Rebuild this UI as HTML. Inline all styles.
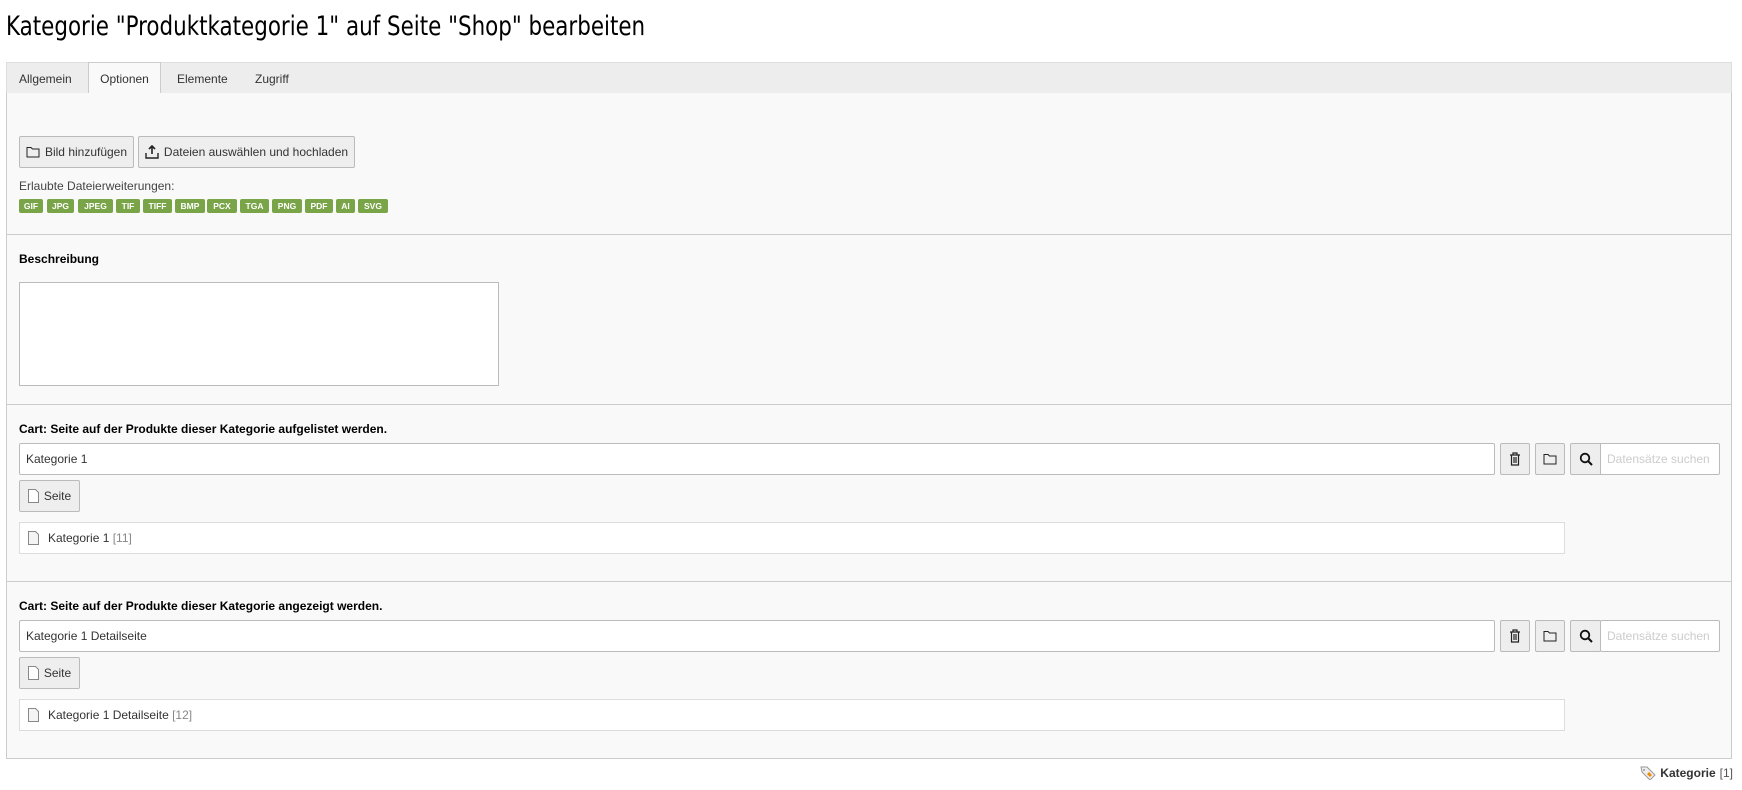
<!DOCTYPE html>
<html><head><meta charset="utf-8"><style>
*{box-sizing:border-box}
body{margin:0;width:1742px;height:790px;background:#fff;font-family:"Liberation Sans",sans-serif;font-size:12px;color:#333;position:relative;overflow:hidden}
.a{position:absolute}
h1{position:absolute;left:6px;top:11px;margin:0;font-family:"DejaVu Sans Condensed","Liberation Sans Narrow",sans-serif;font-weight:normal;font-size:27px;color:#000;white-space:nowrap;transform:scaleX(0.882);transform-origin:0 0}
.tabs{left:6px;top:62px;width:1726px;height:32px;background:#ededed;border:1px solid #ddd;border-bottom:1px solid #ccc}
.tab{position:absolute;top:9px;font-size:12px;color:#333}
.tabact{left:81px;top:-1px;width:73px;height:33px;background:#f9f9f9;border:1px solid #ccc;border-bottom:none;padding-top:9px;text-align:center}
.panel{left:6px;top:93px;width:1726px;height:666px;background:#f9f9f9;border:1px solid #ccc;border-top:none}
.hr{left:6px;width:1726px;height:1px;background:#ccc}
.btn{background:#eee;border:1px solid #bbb;border-radius:2px;display:flex;align-items:center;justify-content:center;gap:5px;color:#333}
.badge{position:absolute;top:199px;height:14px;background:#79a548;color:#fff;font-weight:bold;font-size:8.5px;border-radius:2px;line-height:14px;text-align:center}
.lbl{font-weight:bold;color:#000}
.inp{background:#fff;border:1px solid #bbb;border-radius:2px;padding-left:6px;display:flex;align-items:center}
.list{background:#fff;border:1px solid #ddd;display:flex;align-items:center;padding-left:8px;gap:9px}
</style></head><body>
<h1>Kategorie "Produktkategorie 1" auf Seite "Shop" bearbeiten</h1>
<div class="a tabs">
<span class="tab" style="left:12px">Allgemein</span>
<div class="a tabact">Optionen</div>
<span class="tab" style="left:170px">Elemente</span>
<span class="tab" style="left:248px">Zugriff</span>
</div>
<div class="a panel"></div>

<div class="a btn" style="left:19px;top:136px;width:115px;height:32px"><svg width="14" height="12" viewBox="0 0 14 12"><path d="M1 1.5h4l1.5 1.5h6.5v8h-12z" fill="none" stroke="#222"/></svg>Bild hinzufügen</div>
<div class="a btn" style="left:138px;top:136px;width:217px;height:32px"><svg width="14" height="14" viewBox="0 0 14 14"><path d="M7 1v8M4 4l3-3 3 3" fill="none" stroke="#222" stroke-width="1.6"/><path d="M1 8v5h12V8" fill="none" stroke="#222" stroke-width="1.4"/></svg>Dateien auswählen und hochladen</div>
<div class="a" style="left:19px;top:179px;color:#444">Erlaubte Dateierweiterungen:</div>
<div class="badge" style="left:19px;width:24px">GIF</div>
<div class="badge" style="left:47px;width:27px">JPG</div>
<div class="badge" style="left:78px;width:35px">JPEG</div>
<div class="badge" style="left:116px;width:24px">TIF</div>
<div class="badge" style="left:143px;width:29px">TIFF</div>
<div class="badge" style="left:175px;width:30px">BMP</div>
<div class="badge" style="left:207px;width:30px">PCX</div>
<div class="badge" style="left:240px;width:29px">TGA</div>
<div class="badge" style="left:272px;width:30px">PNG</div>
<div class="badge" style="left:305px;width:28px">PDF</div>
<div class="badge" style="left:336px;width:19px">AI</div>
<div class="badge" style="left:358px;width:30px">SVG</div>
<div class="a hr" style="top:234px"></div>

<div class="a lbl" style="left:19px;top:252px">Beschreibung</div>
<div class="a" style="left:19px;top:282px;width:480px;height:104px;background:#fff;border:1px solid #bbb"></div>
<div class="a hr" style="top:404px"></div>

<div class="a lbl" style="left:19px;top:422px">Cart: Seite auf der Produkte dieser Kategorie aufgelistet werden.</div>
<div class="a inp" style="left:19px;top:443px;width:1476px;height:32px">Kategorie 1</div>
<div class="a btn" style="left:1500px;top:443px;width:30px;height:32px"><svg width="12" height="14" viewBox="0 0 12 14"><path d="M1 3h10M4 3V1h4v2M2.5 3v10h7V3M5 5v6M7 5v6" fill="none" stroke="#222" stroke-width="1.2"/></svg></div>
<div class="a btn" style="left:1535px;top:443px;width:30px;height:32px"><svg width="14" height="12" viewBox="0 0 14 12"><path d="M1 1.5h4l1.5 1.5h6.5v8h-12z" fill="none" stroke="#222"/></svg></div>
<div class="a btn" style="left:1570px;top:443px;width:31px;height:32px;border-radius:2px 0 0 2px"><svg width="14" height="14" viewBox="0 0 14 14"><circle cx="6" cy="6" r="4.3" fill="none" stroke="#111" stroke-width="1.8"/><path d="M9 9l4 4" stroke="#111" stroke-width="2"/></svg></div>
<div class="a inp" style="left:1600px;top:443px;width:120px;height:32px;color:#ccc;border-radius:0 2px 2px 0">Datensätze suchen</div>
<div class="a btn" style="left:19px;top:480px;width:61px;height:32px"><svg width="11" height="14" viewBox="0 0 11 14"><path d="M.5.5h7l3 3v10H.5z" fill="#fff" stroke="#888"/></svg>Seite</div>
<div class="a list" style="left:19px;top:522px;width:1546px;height:32px"><svg width="11" height="14" viewBox="0 0 11 14"><path d="M.5.5h7l3 3v10H.5z" fill="#f4f4f4" stroke="#888"/></svg><span>Kategorie 1 <span style="color:#888">[11]</span></span></div>
<div class="a hr" style="top:581px"></div>

<div class="a lbl" style="left:19px;top:599px">Cart: Seite auf der Produkte dieser Kategorie angezeigt werden.</div>
<div class="a inp" style="left:19px;top:620px;width:1476px;height:32px">Kategorie 1 Detailseite</div>
<div class="a btn" style="left:1500px;top:620px;width:30px;height:32px"><svg width="12" height="14" viewBox="0 0 12 14"><path d="M1 3h10M4 3V1h4v2M2.5 3v10h7V3M5 5v6M7 5v6" fill="none" stroke="#222" stroke-width="1.2"/></svg></div>
<div class="a btn" style="left:1535px;top:620px;width:30px;height:32px"><svg width="14" height="12" viewBox="0 0 14 12"><path d="M1 1.5h4l1.5 1.5h6.5v8h-12z" fill="none" stroke="#222"/></svg></div>
<div class="a btn" style="left:1570px;top:620px;width:31px;height:32px"><svg width="14" height="14" viewBox="0 0 14 14"><circle cx="6" cy="6" r="4.3" fill="none" stroke="#111" stroke-width="1.8"/><path d="M9 9l4 4" stroke="#111" stroke-width="2"/></svg></div>
<div class="a inp" style="left:1600px;top:620px;width:120px;height:32px;color:#ccc">Datensätze suchen</div>
<div class="a btn" style="left:19px;top:657px;width:61px;height:32px"><svg width="11" height="14" viewBox="0 0 11 14"><path d="M.5.5h7l3 3v10H.5z" fill="#fff" stroke="#888"/></svg>Seite</div>
<div class="a list" style="left:19px;top:699px;width:1546px;height:32px"><svg width="11" height="14" viewBox="0 0 11 14"><path d="M.5.5h7l3 3v10H.5z" fill="#f4f4f4" stroke="#888"/></svg><span>Kategorie 1 Detailseite <span style="color:#888">[12]</span></span></div>

<div class="a" style="right:9px;top:766px;display:flex;align-items:center;gap:4px"><svg width="16" height="14" viewBox="0 0 16 14"><path d="M1 1h6l8 8-5 5-8-8z" fill="#eee" stroke="#999"/><circle cx="4" cy="4" r="1" fill="#999"/><path d="M7 8l3 3 2-2-3-3z" fill="#f08c00"/></svg><b>Kategorie</b> <span style="color:#555">[1]</span></div>
</body></html>
